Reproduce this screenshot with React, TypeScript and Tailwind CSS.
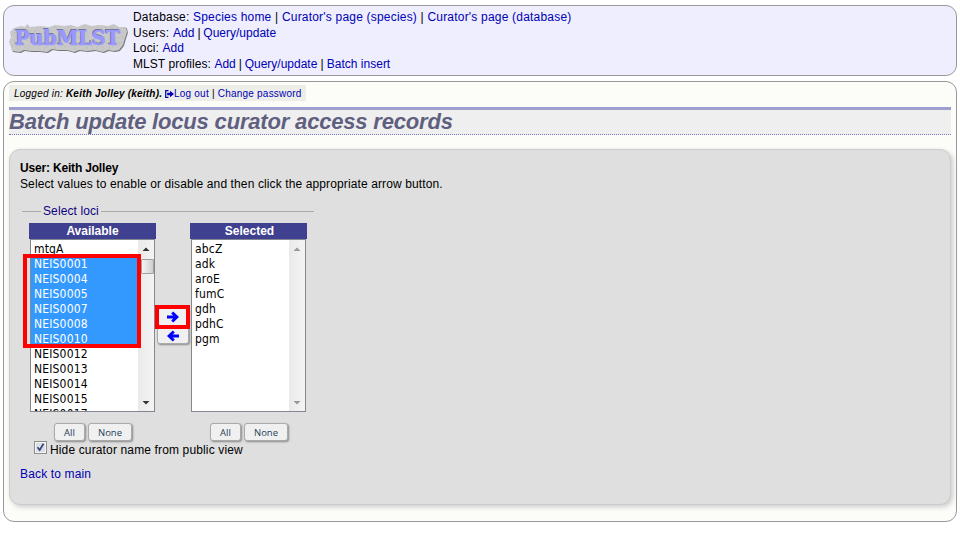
import type { ReactNode } from "react";

const available = ["mtgA", "NEIS0001", "NEIS0004", "NEIS0005", "NEIS0007", "NEIS0008", "NEIS0010", "NEIS0012", "NEIS0013", "NEIS0014", "NEIS0015", "NEIS0017"];
const selected = ["abcZ", "adk", "aroE", "fumC", "gdh", "pdhC", "pgm"];

function Link({ children, className = "" }: { children: ReactNode; className?: string }) {
  return <a className={`text-[#0000b4] ${className}`}>{children}</a>;
}

function Logo() {
  return (
    <svg width="120" height="34" viewBox="0 0 120 34" className="block">
      <defs>
        <filter id="grain" x="0" y="0" width="100%" height="100%">
          <feTurbulence type="fractalNoise" baseFrequency="0.4" numOctaves="3" seed="4" />
          <feColorMatrix values="0 0 0 0 0.45  0 0 0 0 0.45  0 0 0 0 0.45  1.2 0 0 0 -0.5" />
          <feComposite in2="SourceGraphic" operator="in" result="n" />
          <feMerge>
            <feMergeNode in="SourceGraphic" />
            <feMergeNode in="n" />
          </feMerge>
        </filter>
      </defs>
      <path d="M5 6 L12 4 L16 5 L18 2 L20 5 L32 4 L40 5 L47 3 L55 4 L62 3 L68 5 L76 2 L82 4 L91 3 L99 4 L105 2 L110 5 L117 5 L118 10 L116 16 L114 23 L110 28 L105 29 L99 28 L94 30 L86 28 L78 29 L70 28 L65 30 L58 28 L49 28 L43 27 L38 30 L30 29 L22 29 L15 28 L11 30 L3 29 L2 25 L0 20 L2 15 L1 10 Z" fill="#77777a" transform="translate(.9 1)" />
      <path d="M5 6 L12 4 L16 5 L18 2 L20 5 L32 4 L40 5 L47 3 L55 4 L62 3 L68 5 L76 2 L82 4 L91 3 L99 4 L105 2 L110 5 L117 5 L118 10 L116 16 L114 23 L110 28 L105 29 L99 28 L94 30 L86 28 L78 29 L70 28 L65 30 L58 28 L49 28 L43 27 L38 30 L30 29 L22 29 L15 28 L11 30 L3 29 L2 25 L0 20 L2 15 L1 10 Z" fill="#cacaca" filter="url(#grain)" />
      <g fontFamily="'DejaVu Serif','Liberation Serif',serif" fontWeight="700" fontSize="20">
        <text x="5.2" y="22.2" textLength="105" lengthAdjust="spacingAndGlyphs" fill="#67677c">PubMLST</text>
        <text x="6" y="23" textLength="105" lengthAdjust="spacingAndGlyphs" fill="#9999ff" stroke="#9999ff" strokeWidth="0.5">PubMLST</text>
      </g>
    </svg>
  );
}

function Scrollbar({ thumb, muted }: { thumb?: boolean; muted?: boolean }) {
  return (
    <div className="flex w-4 shrink-0 flex-col items-center bg-gradient-to-r from-[#eaeaea] to-[#f4f4f4]">
      <svg width="8" height="4" className={muted ? "mt-[7px] text-[#999]" : "mt-[7px] text-[#333]"}>
        <path d="M0.5 4 L4 0.5 L7.5 4Z" fill="currentColor" />
      </svg>
      {thumb && <div className="mt-[8px] ml-[3px] h-[15px] w-[13px] rounded-[1px] border border-[#a0a0a0] bg-gradient-to-r from-[#f5f5f5] to-[#cfcfcf]" />}
      <svg width="8" height="4" className={muted ? "mt-auto mb-[6px] text-[#999]" : "mt-auto mb-[6px] text-[#333]"}>
        <path d="M0.5 0 L4 3.5 L7.5 0Z" fill="currentColor" />
      </svg>
    </div>
  );
}

function List({ items, className, highlight, muted }: { items: string[]; className: string; highlight?: boolean; muted?: boolean }) {
  return (
    <div className={`flex h-[173px] overflow-hidden border border-[#828790] bg-white ${className}`}>
      <ul className="min-w-0 flex-1 pt-[2px] font-['DejaVu_Sans_Condensed','DejaVu_Sans',sans-serif] text-[12px] leading-[15px] tracking-[0.17px]">
        {items.map((item, i) => (
          <li key={item} className={highlight && i > 0 && i < 7 ? "h-[15px] bg-[#3399ff] pl-[3px] text-white" : "h-[15px] pl-[3px]"}>
            {item}
          </li>
        ))}
      </ul>
      <Scrollbar thumb={highlight} muted={muted} />
    </div>
  );
}

function Button({ children, className }: { children: ReactNode; className: string }) {
  return (
    <button className={`flex items-center justify-center rounded-[3px] border border-[#aaa] bg-[#f0f0f0] shadow-[1px_1px_2px_#888] ${className}`}>
      {children}
    </button>
  );
}

function Pair() {
  return (
    <div className="flex gap-[3px] font-['Open_Sans','Noto_Sans',sans-serif] text-[9.5px] text-[#24425a]">
      <Button className="h-[18px] w-[31px] pt-px">All</Button>
      <Button className="h-[18px] w-[44px] pt-px">None</Button>
    </div>
  );
}

function Arrow({ left }: { left?: boolean }) {
  return (
    <svg width="12" height="12" viewBox="0 0 12 12" className={left ? "rotate-180" : ""}>
      <path d="M0 6H10M5.2 1.5L9.9 6L5.2 10.5" fill="none" stroke="#0000ff" strokeWidth="3" />
    </svg>
  );
}

export default function App() {
  return (
    <div className="h-[534px] w-[960px] overflow-hidden bg-white px-[3px] pt-[5px] font-['Liberation_Sans',Arial,sans-serif] text-[12px] leading-4 whitespace-nowrap text-black">
      <header className="flex h-[71px] w-[954px] rounded-[11px] border border-[#999] bg-[#eeeeff] pl-[5px]">
        <div className="w-[124px] pt-4">
          <Logo />
        </div>
        <div className="pt-[4px] leading-[15.7px]">
          <div className="tracking-[0.2px]">Database: <Link>Species home</Link> | <Link>Curator's page (species)</Link> | <Link>Curator's page (database)</Link></div>
          <div><span className="tracking-[0.3px]">Users: </span><Link>Add</Link><span className="tracking-[-0.3px]"> | </span><Link>Query/update</Link></div>
          <div><span className="tracking-[0.15px]">Loci: </span><Link>Add</Link></div>
          <div><span className="tracking-[0.06px]">MLST profiles: </span><Link>Add</Link><span className="tracking-[-0.3px]"> | </span><Link>Query/update</Link><span className="tracking-[-0.1px]"> | </span><Link>Batch insert</Link></div>
        </div>
      </header>

      <main className="mt-[5px] h-[441px] w-[954px] rounded-[11px] border border-[#999] bg-[#fcfdf8] pt-[3px] pl-[5px]">
        <div className="flex h-4 w-[297px] items-center bg-[#ededea] pt-px pl-[5px] text-[10px]">
          <span className="w-[151px] tracking-[0.22px]"><i>Logged in: <b>Keith Jolley (keith).</b></i></span>
          <svg width="9" height="8" viewBox="0 0 9 8" className="shrink-0">
            <path d="M3.5 .7H.7V7.3H3.5" fill="none" stroke="#0000b4" strokeWidth="1.2" />
            <path d="M2.2 2.7H5V.7L9 4L5 7.3V5.3H2.2Z" fill="#0000b4" />
          </svg>
          <span className="tracking-[0.22px]"><Link>Log out</Link> | <Link>Change password</Link></span>
        </div>

        <h1 className="mt-[6px] h-[28px] w-[942px] border-t-[3px] border-b border-t-[#9f9fcf] border-b-[#7777bb] bg-[#efefef] text-[22px] leading-[24px] font-bold tracking-[-0.18px] text-[#5f5f7f] italic [border-bottom-style:dotted]">
          Batch update locus curator access records
        </h1>

        <section className="mt-[14px] h-[356px] w-[942px] rounded-[11px] border border-[#ccc] bg-[#dfdfdf] pt-[10px] pl-[10px] shadow-[2px_2px_5px_#ccc]">
          <h2 className="font-bold tracking-[-0.18px]">User: Keith Jolley</h2>
          <p className="tracking-[0.115px]">Select values to enable or disable and then click the appropriate arrow button.</p>

          <div className="mt-[11px] ml-[2px] flex h-4 w-[292px] items-center text-[#0f0080]">
            <span className="h-px w-[19px] bg-[#aaa]" />
            <span className="w-[60px] pl-[2px] tracking-[0.1px]">Select loci</span>
            <span className="h-px flex-1 bg-[#aaa]" />
          </div>

          <div className="mt-[4px] ml-[9px] flex">
            <div className="relative w-[127px]">
              <div className="h-4 bg-[#404090] text-center font-bold text-white">Available</div>
              <List items={available} className="ml-px w-[125px]" highlight />
              <div className="absolute top-[31px] left-[-6px] h-[94px] w-[118px] border-4 border-[#ff0000]" />
              <div className="mt-[11px] pl-[25px]"><Pair /></div>
            </div>
            <div className="relative w-[34px] px-px pt-[85px]">
              <Button className="h-[18px] w-8"><Arrow /></Button>
              <Button className="mt-px h-[17px] w-8"><Arrow left /></Button>
              <div className="absolute top-[82px] left-[-1px] h-[24px] w-[35px] border-4 border-[#ff0000]" />
            </div>
            <div className="w-[117px]">
              <div className="h-4 bg-[#404090] pl-[2px] text-center font-bold text-white">Selected</div>
              <List items={selected} className="ml-px w-[115px]" muted />
              <div className="mt-[11px] pl-5"><Pair /></div>
            </div>
          </div>

          <div className="ml-[14px] flex h-4">
            <span className="h-[13px] w-[13px] border border-[#8e8f8f] bg-[#f4f4f4] p-px">
              <svg width="9" height="9" viewBox="0 0 9 9" className="bg-[#dcdfe4]">
                <path d="M1.5 4.2L3.7 7L7.5 .8" fill="none" stroke="#35437f" strokeWidth="1.7" />
              </svg>
            </span>
            <label className="ml-[3px] pt-px tracking-[0.14px]">Hide curator name from public view</label>
          </div>
          <div className="mt-[9px] tracking-[0.15px]"><Link>Back to main</Link></div>
        </section>
      </main>
    </div>
  );
}
